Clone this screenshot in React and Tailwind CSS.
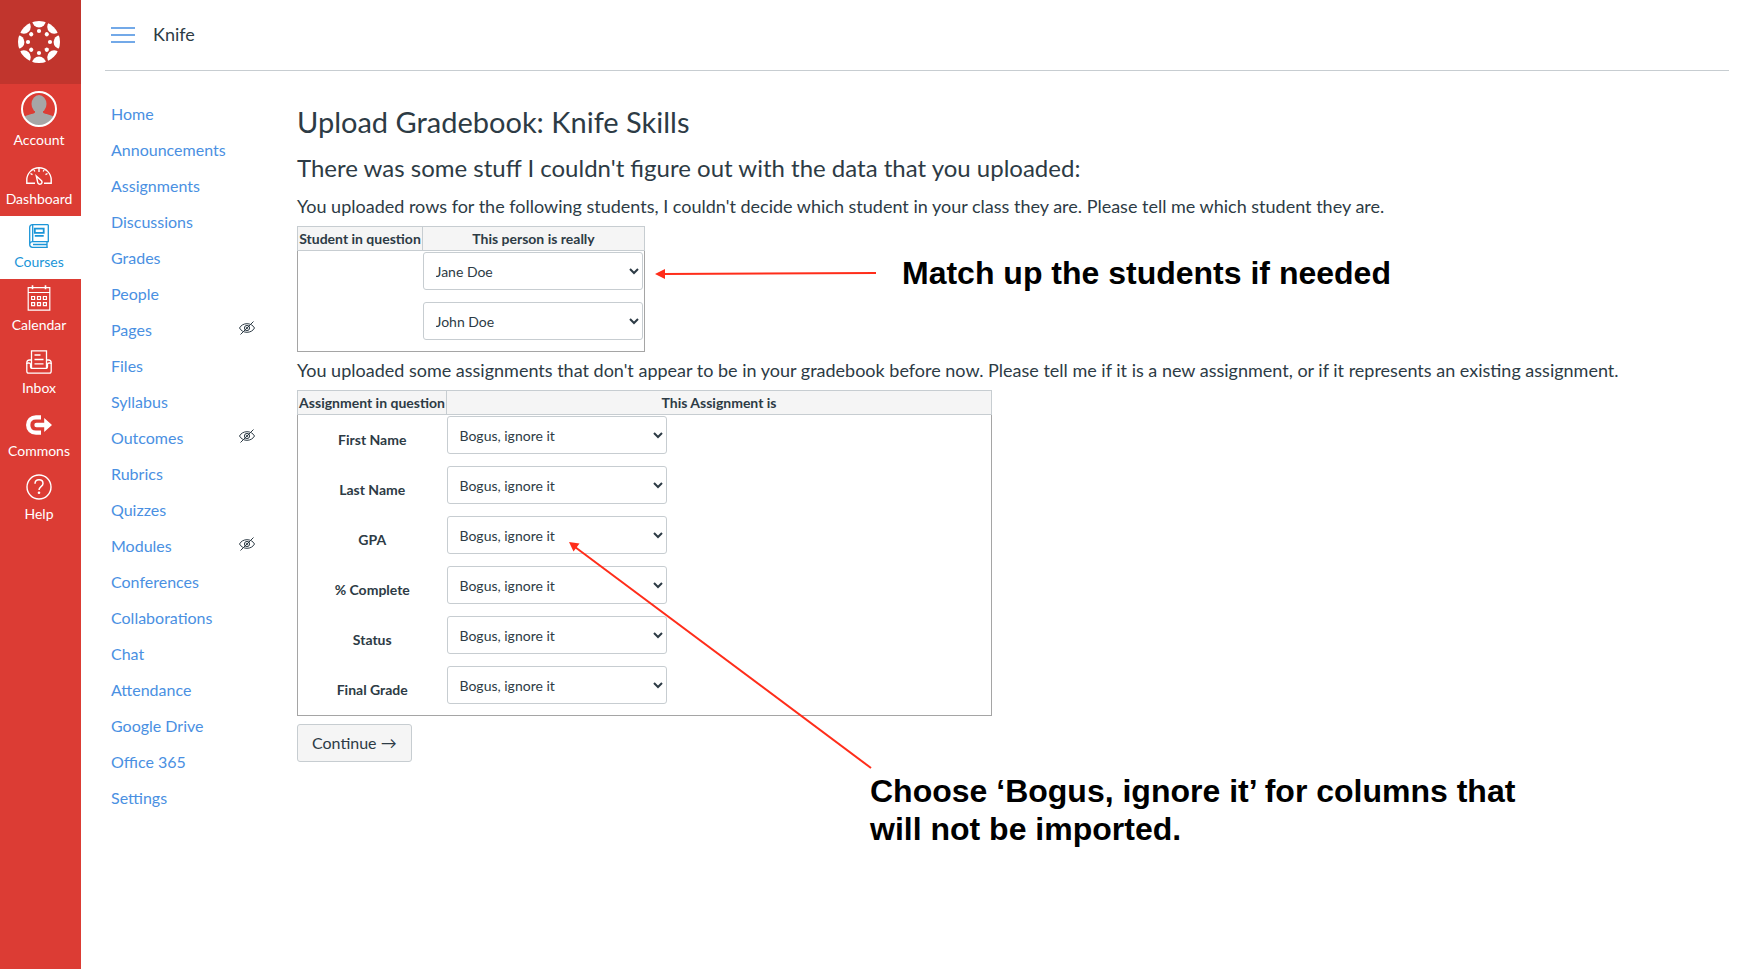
import { clsx } from "clsx";

function CanvasLogo() {
  const angles = [0, 45, 90, 135, 180, 225, 270, 315];

  return (
    <svg viewBox="0 0 42 42" className="h-[42px] w-[42px]" fill="#fff" aria-hidden="true">
      <clipPath id="logo-disc">
        <circle cx="21" cy="21" r="21" />
      </clipPath>
      <g clipPath="url(#logo-disc)">
        {angles.map((angle) => (
          <ellipse key={angle} cx="21" cy="0" rx="6.8" ry="6.4" transform={`rotate(${angle} 21 21)`} />
        ))}
      </g>
      {angles.map((angle) => (
        <circle key={angle} cx="21" cy="10" r="2.1" transform={`rotate(${angle} 21 21)`} />
      ))}
    </svg>
  );
}

function AvatarIcon() {
  return (
    <svg viewBox="0 0 36 36" className="h-9 w-9" aria-hidden="true">
      <clipPath id="avatar-disc">
        <circle cx="18" cy="18" r="16.5" />
      </clipPath>
      <g clipPath="url(#avatar-disc)" fill="#a6a6a6">
        <ellipse cx="18" cy="13" rx="7.5" ry="9" />
        <path d="M14 18h8v3.500c2 2 8 1.500 11 5V36H3v-9.500c3-3.500 9-3 11-5z" />
      </g>
      <circle cx="18" cy="18" r="17" fill="none" stroke="#fff" strokeWidth="2" />
    </svg>
  );
}

function DashboardIcon() {
  return (
    <svg viewBox="0 0 26 18" className="h-[18px] w-[26px]" fill="none" stroke="currentColor" strokeWidth="1.400" aria-hidden="true">
      <path d="M9 16.300H.800V13a12.200 12.200 0 0 1 24.400 0v3.300H18" />
      <path d="M13 1v4M4.500 6.500l2 1.200M21.500 6.500l-2 1.200M8 3l.8 1.500M18 3l-.8 1.500" />
      <path d="M10.300 9l5.200 4.800c1 1.300.4 3-1 3.300-1.300.3-2.500-.3-2.800-1.700z" />
    </svg>
  );
}

function CoursesIcon() {
  return (
    <svg viewBox="0 0 20 24" className="h-6 w-5" fill="none" stroke="currentColor" strokeWidth="1.300" aria-hidden="true">
      <path d="M19.300.700H3.500C1.700.700.700 1.700.700 3.500v17M3.700.700v17M19.300.700v17H3.500C1.700 17.700.700 18.900.700 20.500s1 2.800 2.800 2.800h15.300" />
      <path d="M18 18v5M4 20.500h14" />
      <path d="M5.800 4.600h8.900v4.300H5.800zM5.800 11.900h8.900" strokeWidth="1.800" />
    </svg>
  );
}

function CalendarIcon() {
  return (
    <svg viewBox="0 0 24 26" className="h-[26px] w-6" fill="none" stroke="currentColor" strokeWidth="1.200" aria-hidden="true">
      <path d="M1.200 2.700h21.600v22.500H1.200zM1.200 7.500h21.600" />
      <path d="M5.500.300v4M18.500.300v4" strokeWidth="1.600" />
      <path d="M4.600 11.500h3v3h-3zM10.500 11.500h3v3h-3zM16.400 11.500h3v3h-3zM4.600 17.600h3v3h-3zM10.500 17.600h3v3h-3zM16.400 17.600h3v3h-3z" />
    </svg>
  );
}

function InboxIcon() {
  return (
    <svg viewBox="0 0 26 24" className="h-6 w-[26px]" fill="none" stroke="currentColor" strokeWidth="1.300" aria-hidden="true">
      <path d="M5.500 18V.800h15V18M8.500 5h6M8.500 9.500h9M8.500 13.800h9" />
      <path d="M5 10H3.500C1.800 10 .800 11 .800 13v8.300c0 1.200.7 1.900 1.900 1.900h20.600c1.200 0 1.900-.7 1.900-1.900V13c0-2-1-3-2.700-3H21" />
      <path d="M.800 14c0-1.500 3.700-1.200 3.700 0v2.500c0 1.200.7 1.900 1.900 1.900h13.200c1.200 0 1.900-.7 1.900-1.900V14c0-1.200 3.700-1.500 3.700 0" />
    </svg>
  );
}

function CommonsIcon() {
  return (
    <svg viewBox="0 0 26 22" className="h-[22px] w-[26px]" fill="none" aria-hidden="true">
      <path d="M15 2.300h-5C5.300 2.300 2.200 5.600 2.200 10s3.100 7.700 7.800 7.700h5" stroke="currentColor" strokeWidth="4.300" />
      <path d="M10.500 7.800h7.700V3L26 10l-7.800 7v-4.800h-7.700a2.200 2.200 0 0 1 0-4.400z" fill="currentColor" />
    </svg>
  );
}

function HelpIcon() {
  return (
    <svg viewBox="0 0 26 26" className="h-[26px] w-[26px]" fill="none" stroke="currentColor" aria-hidden="true">
      <circle cx="13" cy="13" r="12" strokeWidth="1.400" />
      <path d="M9 9.700C9 7.200 10.600 5.700 13 5.700s4 1.500 4 3.700c0 3.300-4 3.200-4 6.600" strokeWidth="1.500" />
      <circle cx="13" cy="18.800" r="1.300" fill="currentColor" stroke="none" />
    </svg>
  );
}

function HiddenIcon() {
  return (
    <svg viewBox="0 0 16 14" className="mb-1 h-3.5 w-4" fill="none" stroke="#2d3b45" strokeWidth="1" aria-label="Hidden from students" role="img">
      <path d="M.5 7C2 4.200 4.800 2.700 8 2.700S14 4.200 15.500 7c-1.500 2.800-4.300 4.300-7.500 4.300S2 9.800.500 7z" />
      <circle cx="8" cy="7" r="2.600" />
      <circle cx="8" cy="7" r=".8" />
      <path d="M1.500 13.500L14.500.500" />
    </svg>
  );
}

const globalNav = [
  { label: "Dashboard", icon: DashboardIcon },
  { label: "Courses", icon: CoursesIcon, active: true },
  { label: "Calendar", icon: CalendarIcon },
  { label: "Inbox", icon: InboxIcon },
  { label: "Commons", icon: CommonsIcon },
  { label: "Help", icon: HelpIcon },
];

const courseNav = [
  { label: "Home" },
  { label: "Announcements" },
  { label: "Assignments" },
  { label: "Discussions" },
  { label: "Grades" },
  { label: "People" },
  { label: "Pages", hidden: true },
  { label: "Files" },
  { label: "Syllabus" },
  { label: "Outcomes", hidden: true },
  { label: "Rubrics" },
  { label: "Quizzes" },
  { label: "Modules", hidden: true },
  { label: "Conferences" },
  { label: "Collaborations" },
  { label: "Chat" },
  { label: "Attendance" },
  { label: "Google Drive" },
  { label: "Office 365" },
  { label: "Settings" },
];

const students = ["Jane Doe", "John Doe"];

const assignments = ["First Name", "Last Name", "GPA", "% Complete", "Status", "Final Grade"];

function GlobalNav() {
  return (
    <nav aria-label="Global" className="w-[81px] shrink-0 bg-[#dc3c34] text-sm leading-5 text-white">
      <a href="#" aria-label="Canvas home" className="flex h-[84px] items-center bg-[#c1352d] pl-[18px]">
        <CanvasLogo />
      </a>
      <ul>
        <li>
          <a href="#" className="flex h-[69px] flex-col items-center gap-[3px] pt-[7px] pr-[3px]">
            <AvatarIcon />
            Account
          </a>
        </li>
        {globalNav.map(({ label, icon: Icon, active }) => (
          <li key={label}>
            <a
              href="#"
              className={clsx(
                "flex h-[63px] flex-col items-center justify-end gap-1 pr-[3px] pb-[7px]",
                active && "bg-white text-[#1b95d8]"
              )}
            >
              <Icon />
              {label}
            </a>
          </li>
        ))}
      </ul>
    </nav>
  );
}

function CourseNav() {
  return (
    <nav aria-label="Course" className="w-[192px] shrink-0">
      <ul>
        {courseNav.map(({ label, hidden }) => (
          <li key={label} className="flex h-9 items-center justify-between pr-[42px] pl-1.5">
            <a href="#" className="text-base text-[#4a90e2]">
              {label}
            </a>
            {hidden && <HiddenIcon />}
          </li>
        ))}
      </ul>
    </nav>
  );
}

function GradeSelect({ label, options }) {
  return (
    <select
      aria-label={label}
      className="mb-2.5 block h-[38px] w-[220px] rounded-[3px] border border-[#c7cdd1] bg-white px-2 text-sm"
    >
      {options.map((option) => (
        <option key={option}>{option}</option>
      ))}
    </select>
  );
}

function HeaderCell({ children, className }) {
  return (
    <th scope="col" className={clsx("h-6 border border-[#c7cdd1] bg-[#f5f5f5] p-0 text-center font-bold", className)}>
      {children}
    </th>
  );
}

function StudentTable() {
  return (
    <table className="w-[348px] table-fixed border-collapse border border-[#a5a5a5] text-sm">
      <thead>
        <tr>
          <HeaderCell className="w-[125px]">Student in question</HeaderCell>
          <HeaderCell>This person is really</HeaderCell>
        </tr>
      </thead>
      <tbody>
        {students.map((student) => (
          <tr key={student}>
            <td className="px-0 py-px" />
            <td className="px-0 py-px">
              <GradeSelect label="This person is really" options={[student]} />
            </td>
          </tr>
        ))}
      </tbody>
    </table>
  );
}

function AssignmentTable() {
  return (
    <table className="w-[695px] table-fixed border-collapse border border-[#a5a5a5] text-sm">
      <thead>
        <tr>
          <HeaderCell className="w-[149px]">Assignment in question</HeaderCell>
          <HeaderCell>This Assignment is</HeaderCell>
        </tr>
      </thead>
      <tbody>
        {assignments.map((assignment) => (
          <tr key={assignment}>
            <th scope="row" className="px-0 py-px text-center font-bold">
              {assignment}
            </th>
            <td className="px-0 py-px">
              <GradeSelect label={assignment} options={["Bogus, ignore it"]} />
            </td>
          </tr>
        ))}
      </tbody>
    </table>
  );
}

// Tutorial callouts drawn on top of the page
function Annotations() {
  return (
    <div className="pointer-events-none absolute inset-0 font-['Liberation_Sans',Arial,sans-serif] text-[32px] leading-[38px] font-bold text-black">
      <svg width="620" height="700" className="absolute top-0 left-0" stroke="#ff2d1a" strokeWidth="2" fill="#ff2d1a" aria-hidden="true">
        <path d="M366 178L579 177" />
        <path d="M358 178l10-5v10z" stroke="none" />
        <path d="M278 451L574 672" />
        <path d="M272 446l10.500 1.500-6 8z" stroke="none" />
      </svg>
      <p className="absolute top-[158px] left-[605px] whitespace-nowrap">Match up the students if needed</p>
      <p className="absolute top-[676px] left-[573px] whitespace-nowrap">
        Choose ‘Bogus, ignore it’ for columns that
        <br />
        will not be imported.
      </p>
    </div>
  );
}

export default function App() {
  return (
    <div className="flex min-h-screen bg-white font-['Lato',sans-serif] text-[#2d3b45]">
      <GlobalNav />

      <div className="min-w-0 flex-1 pr-[22px] pl-6">
        <header className="flex h-[71px] items-center gap-[18px] border-b border-[#c7cdd1] pl-1.5">
          <button type="button" aria-label="Toggle course navigation" className="flex h-4 w-6 flex-col justify-between">
            <span className="h-0.5 w-full bg-[#73a9e8]" />
            <span className="h-0.5 w-full bg-[#73a9e8]" />
            <span className="h-0.5 w-full bg-[#73a9e8]" />
          </button>
          <span className="pb-0.5 text-lg">Knife</span>
        </header>

        <div className="flex pt-[25px]">
          <CourseNav />

          <main className="relative min-w-0 flex-1">
            <h1 className="pt-2 text-[29px] leading-9">Upload Gradebook: Knife Skills</h1>
            <h2 className="mt-2.5 text-2xl leading-9">There was some stuff I couldn't figure out with the data that you uploaded:</h2>
            <p className="my-1.5 text-lg leading-7">
              You uploaded rows for the following students, I couldn't decide which student in your class they are. Please
              tell me which student they are.
            </p>
            <StudentTable />
            <p className="mt-1 mb-1.5 text-lg leading-7">
              You uploaded some assignments that don't appear to be in your gradebook before now. Please tell me if it is a
              new assignment, or if it represents an existing assignment.
            </p>
            <AssignmentTable />
            <button
              type="button"
              className="mt-2 h-[38px] rounded-[3px] border border-[#c7cdd1] bg-[#f5f5f5] px-3.5 text-base"
            >
              Continue →
            </button>
            <Annotations />
          </main>
        </div>
      </div>
    </div>
  );
}
